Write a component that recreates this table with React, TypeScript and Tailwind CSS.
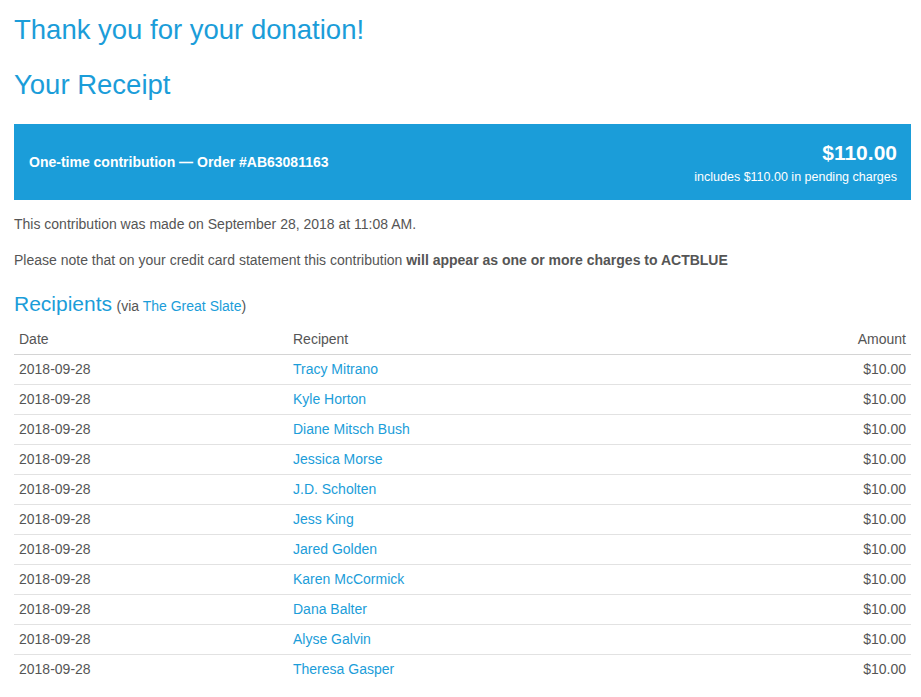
const recipients = [
  'Tracy Mitrano',
  'Kyle Horton',
  'Diane Mitsch Bush',
  'Jessica Morse',
  'J.D. Scholten',
  'Jess King',
  'Jared Golden',
  'Karen McCormick',
  'Dana Balter',
  'Alyse Galvin',
  'Theresa Gasper',
];

export default function App() {
  return (
    <div className="min-h-screen bg-white pl-[14px] pr-[10px] pt-[14px] pb-6 font-['Liberation_Sans',Arial,sans-serif] text-[#555]">
      <h1 className="text-[27.5px] leading-[32px] text-[#1b9dd9]">Thank you for your donation!</h1>
      <h2 className="mt-[23px] text-[27.5px] leading-[32px] text-[#1b9dd9]">Your Receipt</h2>

      <div className="mt-[23px] flex h-[76px] items-center justify-between bg-[#1b9dd9] pl-[15px] pr-[14px] text-white">
        <div className="text-[14px] font-bold">One-time contribution — Order #AB63081163</div>
        <div className="text-right">
          <div className="text-[21px] font-bold leading-[26px]">$110.00</div>
          <div className="mt-[3px] text-[12.5px] leading-[16px]">includes $110.00 in pending charges</div>
        </div>
      </div>

      <p className="mt-[14px] text-[14px] leading-[20px]">
        This contribution was made on September 28, 2018 at 11:08 AM.
      </p>
      <p className="mt-[16px] text-[14px] leading-[20px]">
        Please note that on your credit card statement this contribution{' '}
        <b>will appear as one or more charges to ACTBLUE</b>
      </p>

      <div className="mt-[22px] h-[24px] leading-[24px]">
        <span className="text-[21px] text-[#1b9dd9]">Recipients</span>{' '}
        <span className="text-[14px]">
          (via <a className="text-[#1b9dd9]">The Great Slate</a>)
        </span>
      </div>

      <table className="mt-[9px] w-full border-collapse text-[14px]">
        <thead>
          <tr className="h-[29px] border-b border-[#d4d4d4]">
            <th className="w-[274px] px-[5px] text-left font-normal">Date</th>
            <th className="px-[5px] text-left font-normal">Recipent</th>
            <th className="px-[5px] text-right font-normal">Amount</th>
          </tr>
        </thead>
        <tbody>
          {recipients.map((name, i) => (
            <tr
              key={name}
              className={i < recipients.length - 1 ? 'h-[30px] border-b border-[#e2e2e2]' : 'h-[30px]'}
            >
              <td className="px-[5px]">2018-09-28</td>
              <td className="px-[5px] text-[#1b9dd9]">{name}</td>
              <td className="px-[5px] text-right">$10.00</td>
            </tr>
          ))}
        </tbody>
      </table>
    </div>
  );
}
